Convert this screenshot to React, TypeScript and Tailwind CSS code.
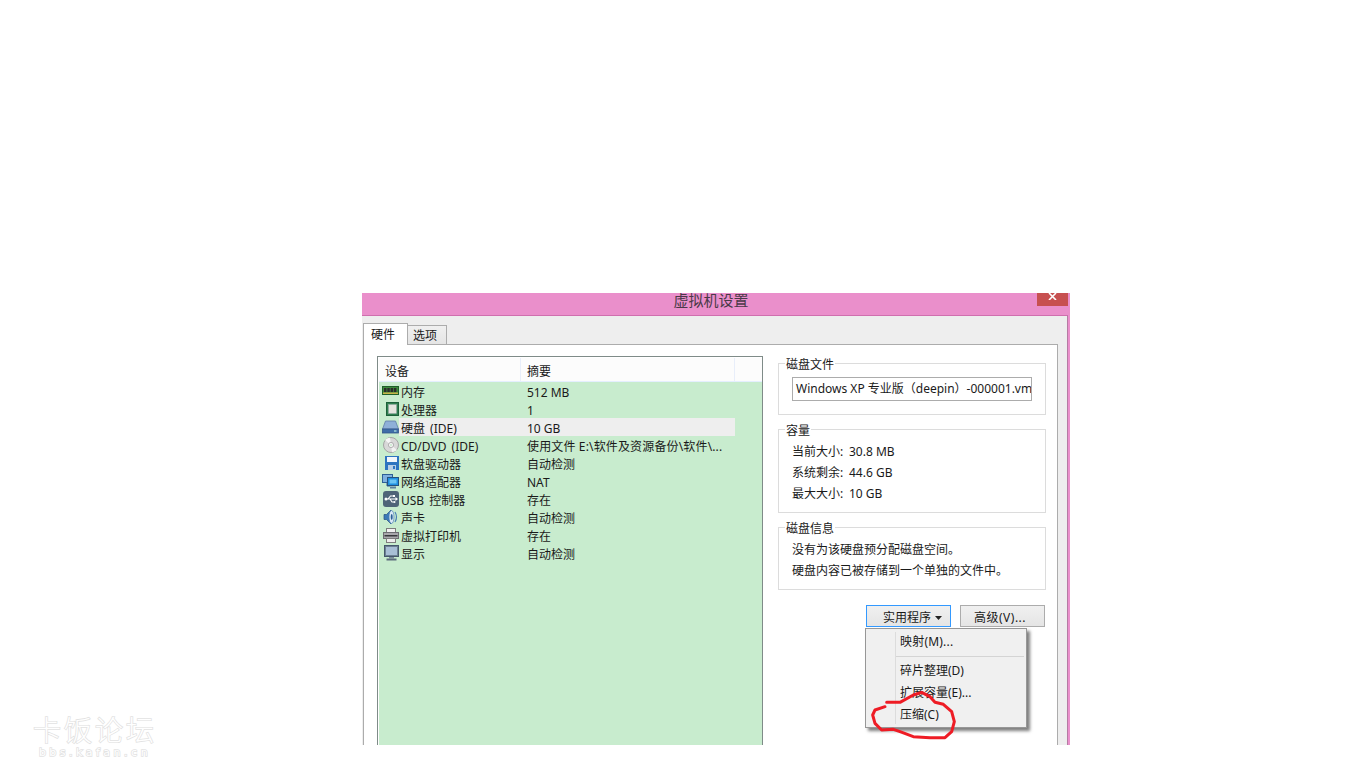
import React from "react";

const Ram = () => (
  <svg width="17" height="16" viewBox="0 0 17 16">
    <rect x="0.5" y="3.5" width="16" height="8" fill="#3d8a3d" stroke="#1f5f2a" />
    <rect x="2" y="5" width="2.5" height="4" fill="#2b2b2b" />
    <rect x="5.3" y="5" width="2.5" height="4" fill="#2b2b2b" />
    <rect x="8.6" y="5" width="2.5" height="4" fill="#2b2b2b" />
    <rect x="11.9" y="5" width="2.5" height="4" fill="#2b2b2b" />
    <rect x="1" y="9.5" width="15" height="1.5" fill="#c9b44a" />
  </svg>
);
const Cpu = () => (
  <svg width="13" height="14" viewBox="0 0 13 14">
    <rect x="0.5" y="0.5" width="12" height="13" fill="#2f7f4f" stroke="#1d5f3a" />
    <rect x="2.5" y="2.5" width="8" height="9" fill="#e4e4de" stroke="#9aa" strokeWidth="0.5" />
  </svg>
);
const Hdd = () => (
  <svg width="17" height="14" viewBox="0 0 17 14">
    <path d="M3.5 1 H13.5 L16.5 9 H0.5 Z" fill="#8fb0d8" stroke="#5f7ea8" strokeWidth="0.8" />
    <rect x="0.5" y="9" width="16" height="4" fill="#3f6ea8" stroke="#34568a" strokeWidth="0.8" />
    <rect x="12" y="10.5" width="2.5" height="1" fill="#cfe" />
  </svg>
);
const Cd = () => (
  <svg width="16" height="16" viewBox="0 0 16 16">
    <circle cx="8" cy="8" r="7.5" fill="#d8d8d8" stroke="#a4a4a4" />
    <path d="M8 8 L2 3 A7.5 7.5 0 0 1 7 .8 Z" fill="#f6f6f6" />
    <path d="M8 8 L14 13 A7.5 7.5 0 0 1 9 15.2 Z" fill="#f2f2f2" />
    <circle cx="8" cy="8" r="2.6" fill="#f4f4f4" stroke="#999" strokeWidth="0.7" />
    <circle cx="8" cy="8" r="1" fill="#c8ecce" />
  </svg>
);
const Floppy = () => (
  <svg width="14" height="14" viewBox="0 0 14 14">
    <path d="M0 0 H14 V14 H0 Z" fill="#2e74c0" />
    <rect x="2" y="1" width="10" height="5" fill="#f2f6fb" />
    <rect x="3" y="9" width="8" height="5" fill="#b9cfe6" />
    <rect x="8" y="10" width="2" height="3" fill="#2e74c0" />
  </svg>
);
const Net = () => (
  <svg width="17" height="15" viewBox="0 0 17 15">
    <rect x="0.5" y="0.5" width="10" height="8" fill="#7fb0e0" stroke="#2f5f96" />
    <path d="M5 9 V12 H8" fill="none" stroke="#2f5f96" />
    <rect x="5.5" y="3.5" width="11" height="8" fill="#1f8fe0" stroke="#24507f" />
    <rect x="7.5" y="5.5" width="7" height="4" fill="#6cc4f4" />
    <rect x="8" y="12.5" width="6" height="2" fill="#5f7f9f" />
  </svg>
);
const Usb = () => (
  <svg width="16" height="16" viewBox="0 0 16 16">
    <rect x="0" y="0" width="16" height="16" rx="3" fill="#4f6478" />
    <path d="M2 8 H13 M5 8 L7.5 5 H10 M7 8 L9 11 H11" fill="none" stroke="#fff" strokeWidth="1.1" />
    <path d="M12.5 6 L15 8 L12.5 10 Z" fill="#fff" />
    <circle cx="3" cy="8" r="1.5" fill="#fff" />
    <rect x="10" y="4" width="2" height="2" fill="#fff" />
    <circle cx="11.5" cy="11" r="1" fill="#fff" />
  </svg>
);
const Sound = () => (
  <svg width="16" height="16" viewBox="0 0 16 16">
    <path d="M1 5.5 H3.5 L8 1 V15 L3.5 10.5 H1 Z" fill="#3c7ab8" stroke="#26507e" strokeWidth="0.7" />
    <ellipse cx="8.5" cy="8" rx="2.5" ry="6.5" fill="#dbe9f6" stroke="#4a80b4" strokeWidth="0.7" />
    <ellipse cx="8.7" cy="8" rx="1" ry="3" fill="#2b5f96" />
    <path d="M12 3 Q15 8 12 13" fill="none" stroke="#4a80b4" strokeWidth="1.2" />
  </svg>
);
const Printer = () => (
  <svg width="16" height="15" viewBox="0 0 16 15">
    <rect x="3.5" y="0.5" width="9" height="4" fill="#f2f2f2" stroke="#7d7d7d" />
    <rect x="0.5" y="4.5" width="15" height="6" fill="#a8a8ac" stroke="#6d6d72" />
    <rect x="1.5" y="7" width="13" height="1.5" fill="#39393d" />
    <rect x="3.5" y="10.5" width="9" height="4" fill="#eeeeee" stroke="#7d7d7d" />
  </svg>
);
const Monitor = () => (
  <svg width="15" height="16" viewBox="0 0 15 16">
    <rect x="0.5" y="0.5" width="14" height="11" fill="#6d8094" stroke="#45586c" />
    <rect x="2" y="2" width="11" height="8" fill="#a8bfd6" />
    <rect x="5" y="12" width="5" height="1.5" fill="#7c8c9c" />
    <rect x="2.5" y="13.5" width="10" height="2" fill="#5c6c7c" />
  </svg>
);

const rows: { icon: React.ReactNode; name: string; value: string; selected?: boolean; wide?: boolean }[] = [
  { icon: <Ram />, name: "内存", value: "512 MB" },
  { icon: <Cpu />, name: "处理器", value: "1" },
  { icon: <Hdd />, name: "硬盘 (IDE)", value: "10 GB", selected: true },
  { icon: <Cd />, name: "CD/DVD (IDE)", value: "使用文件 E:\\软件及资源备份\\软件\\...", wide: true },
  { icon: <Floppy />, name: "软盘驱动器", value: "自动检测" },
  { icon: <Net />, name: "网络适配器", value: "NAT" },
  { icon: <Usb />, name: "USB 控制器", value: "存在" },
  { icon: <Sound />, name: "声卡", value: "自动检测" },
  { icon: <Printer />, name: "虚拟打印机", value: "存在" },
  { icon: <Monitor />, name: "显示", value: "自动检测" },
];

const Group = ({ title, className, children }: { title: string; className: string; children: React.ReactNode }) => (
  <div className={`border border-[#dcdcdc] pl-[13px] ${className}`}>
    <div className="-mt-[7px] -ml-[7px] h-[16px] w-fit bg-white px-[1px] leading-[16px]">{title}</div>
    {children}
  </div>
);

export default function App() {
  return (
    <div
      className="relative h-[768px] w-[1366px] overflow-hidden bg-white pt-[293px] pl-[362px] text-[12px] text-[#1a1a1a]"
      style={{ fontFamily: '"Noto Sans", "Noto Sans CJK SC", sans-serif' }}
    >
      <div className="relative flex h-[452px] w-[708px] flex-col bg-[#ea8fcb]">
        <div className="relative flex h-[22px] shrink-0 justify-center pr-[10px]">
          <span className="text-[15px] leading-[15px] text-[#4a3a48]">虚拟机设置</span>
          <div className="absolute top-0 right-[2px] flex h-[13px] w-[31px] justify-center bg-[#c75050]">
            <svg width="9" height="7" viewBox="0 0 9 7">
              <path d="M1 0 L8 7 M8 0 L1 7" stroke="#fff" strokeWidth="1.6" />
            </svg>
          </div>
        </div>
        <div className="flex min-h-0 w-[706px] flex-1 flex-col border-t border-r border-t-[#cf6fae] border-r-[#b57ba3] bg-[#eeeeee] pt-[7px] pl-[1px]">
          <div className="flex h-[21px] shrink-0 items-end">
            <div className="z-10 -mb-[1px] flex h-[22px] w-[45px] items-center border border-b-0 border-[#acacac] bg-white pl-[7px]">硬件</div>
            <div className="flex h-[19px] w-[39px] items-center border border-b-0 border-l-0 border-[#acacac] bg-gradient-to-b from-[#f0f0f0] to-[#e5e5e5] pt-[2px] pl-[5px]">选项</div>
          </div>
          <div className="flex min-h-0 w-[695px] flex-1 border border-b-0 border-[#acacac] bg-white pt-[11px] pl-[13px]">
            <div className="flex w-[386px] shrink-0 flex-col border border-b-0 border-[#7f8b88] pt-[1px] pl-[1px]">
              <div className="flex h-[24px] w-[383px] shrink-0 items-center border-b border-[#e5efff] bg-[#fcfcfc]">
                <div className="h-full w-[142px] border-r border-[#e8eefa] pl-[6px] leading-[27px]">设备</div>
                <div className="h-full w-[214px] border-r border-[#e8eefa] pl-[6px] leading-[27px]">摘要</div>
              </div>
              <div className="flex-1 bg-[#c8ecce]">
                {rows.map((r) => (
                  <div key={r.name} className="flex h-[18px] items-center">
                    <div className="flex w-[20px] shrink-0 items-center justify-end">{r.icon}</div>
                    <div className={`flex h-full w-[336px] items-start pt-[2px] leading-[18px] ${r.selected ? "bg-[#eeeeee]" : ""}`}>
                      <div className="w-[128px] shrink-0 pl-[2px] whitespace-nowrap [word-spacing:2px]">{r.name}</div>
                      <div className={`whitespace-nowrap ${r.wide ? "tracking-[0.15px]" : ""}`}>{r.value}</div>
                    </div>
                  </div>
                ))}
              </div>
            </div>
            <div className="ml-[15px] flex w-[268px] shrink-0 flex-col pt-[7px]">
              <Group title="磁盘文件" className="h-[52px]">
                <div className="mt-[4px] h-[24px] w-[240px] overflow-hidden border border-[#acacac] pl-[3px] leading-[22px] whitespace-nowrap">
                  Windows XP 专业版（deepin）-000001.vmdk
                </div>
              </Group>
              <Group title="容量" className="mt-[14px] h-[84px]">
                <div className="mt-[2px] flex flex-col">
                  {[
                    ["当前大小:", "30.8 MB"],
                    ["系统剩余:", "44.6 GB"],
                    ["最大大小:", "10 GB"],
                  ].map(([k, v]) => (
                    <div key={k} className="flex h-[21px] items-center">
                      <span className="w-[57px]">{k}</span>
                      <span>{v}</span>
                    </div>
                  ))}
                </div>
              </Group>
              <Group title="磁盘信息" className="mt-[14px] h-[63px]">
                <div className="mt-[2px] flex flex-col">
                  <div className="flex h-[21px] items-center">没有为该硬盘预分配磁盘空间。</div>
                  <div className="flex h-[21px] items-center">硬盘内容已被存储到一个单独的文件中。</div>
                </div>
              </Group>
              <div className="mt-[15px] ml-[88px] flex gap-[9px]">
                <div className="relative h-[22px] w-[85px]">
                  <div className="flex h-full items-center gap-[4px] border border-[#3399ff] bg-gradient-to-b from-[#f0f0f0] to-[#e5e5e5] pt-[3px] pl-[16px]">
                    <span>实用程序</span>
                    <svg width="7" height="4" viewBox="0 0 7 4"><path d="M0 0 H7 L3.5 4 Z" fill="#222" /></svg>
                  </div>
                  <div className="absolute top-[23px] -left-[1px] z-20 h-[100px] w-[162px] border border-[#979797] bg-[#f0f0f0] shadow-[3px_3px_3px_rgba(0,0,0,0.5)]">
                    <div className="absolute top-[3px] bottom-[3px] left-[29px] w-px bg-[#dcdcdc]" />
                    <div className="flex h-[26px] items-center pl-[34px] tracking-[0.2px]">映射(M)...</div>
                    <div className="mt-[1px] mr-[2px] ml-[30px] h-px bg-[#d4d4d4]" />
                    <div className="mt-[3px] flex h-[22px] items-center pl-[34px]">碎片整理(D)</div>
                    <div className="flex h-[22px] items-center pl-[34px]">扩展容量(E)...</div>
                    <div className="flex h-[22px] items-center pl-[34px]">压缩(C)</div>
                  </div>
                </div>
                <div className="flex h-[22px] w-[85px] items-center border border-[#acacac] bg-gradient-to-b from-[#f0f0f0] to-[#e5e5e5] pt-[3px] pl-[13px] tracking-[0.5px]">高级(V)...</div>
              </div>
            </div>
          </div>
        </div>
        <svg className="absolute top-[302px] left-[488px] z-30" width="225" height="160" viewBox="0 0 675 480">
          <path
            d="M110 322 L150 322 L190 300 L215 292 L240 305 L255 322 L280 328 L305 350 L313 380 L305 410 L285 428 L240 428 L190 425 L150 410 L130 403 L95 405 L75 385 L68 360 L75 345 L105 335"
            fill="none"
            stroke="#ee1c25"
            strokeWidth="9"
            strokeLinejoin="round"
            strokeLinecap="round"
          />
        </svg>
      </div>
      <div className="absolute top-[713px] left-[32px] flex w-[126px] flex-col items-center text-white [-webkit-text-stroke:1.5px_#e2e2e2] [paint-order:stroke_fill]">
        <div className="text-[28px] leading-[32px] font-light tracking-[3px] whitespace-nowrap" style={{ fontFamily: '"Noto Sans CJK SC", sans-serif' }}>卡饭论坛</div>
        <div className="mt-[2px] text-[11px] leading-[12px] tracking-[3.5px] whitespace-nowrap" style={{ fontFamily: '"DejaVu Sans", sans-serif' }}>bbs.kafan.cn</div>
      </div>
    </div>
  );
}
